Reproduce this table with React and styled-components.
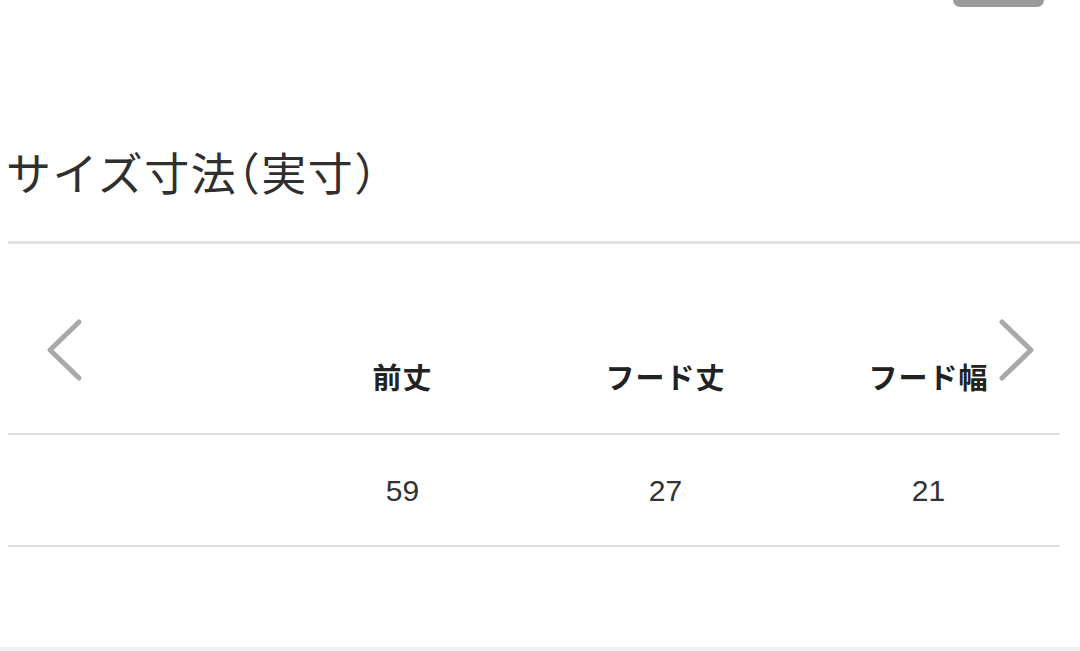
import styled, { createGlobalStyle } from "styled-components";

const GlobalStyle = createGlobalStyle`
  html, body {
    margin: 0;
    padding: 0;
    background: #fff;
  }
  body {
    font-family: "Noto Sans CJK JP", "Liberation Sans", sans-serif;
    color: #333;
    height: 651px;
    overflow: hidden;
  }
`;

const Page = styled.div`
  display: flex;
  flex-direction: column;
  height: 651px;
`;

const TopBar = styled.div`
  display: flex;
  justify-content: flex-end;
  height: 7px;
  padding-right: 36px;
  overflow: hidden;
`;

const Handle = styled.div`
  width: 91px;
  height: 7px;
  background: #9b9b9b;
  border-radius: 0 0 12px 12px;
`;

const Title = styled.h2`
  margin: 0;
  padding: 138px 0 0 6px;
  font-size: 45px;
  line-height: 54px;
  font-weight: 400;
  color: #2f2f2f;
  letter-spacing: 1.5px;
`;

const Paren = styled.span`
  font-feature-settings: "halt";
`;

const Divider = styled.div`
  margin: 42px 0 0 8px;
  height: 3px;
  background: #e2e2e2;
`;

const Slider = styled.div`
  position: relative;
  padding-left: 8px;
`;

const Table = styled.div`
  width: 1052px;
  display: grid;
  grid-template-columns: repeat(4, 1fr);
`;

const Cell = styled.div`
  text-align: center;
  line-height: 36px;
  border-bottom: 2px solid #dedede;
  padding: ${(p) => (p.$head ? "114px 0 39px" : "38px 0 36px")};
  font-size: ${(p) => (p.$head ? "29px" : "30px")};
  font-weight: ${(p) => (p.$head ? 700 : 400)};
  font-family: ${(p) =>
    p.$head
      ? `"Noto Sans CJK JP", sans-serif`
      : `"Liberation Sans", Arial, sans-serif`};
  color: ${(p) => (p.$head ? "#222" : "#333")};
  letter-spacing: ${(p) => (p.$head ? "1px" : "0")};
`;

const Arrow = styled.svg`
  position: absolute;
  top: 74px;
  ${(p) => (p.$side === "left" ? "left: 45px;" : "left: 998px;")}
  width: 38px;
  height: 64px;
`;

const BottomBand = styled.div`
  margin-top: auto;
  height: 4px;
  background: #f0f0f0;
`;

const headers = ["", "前丈", "フード丈", "フード幅"];
const values = ["", "59", "27", "21"];

function Chevron({ side }) {
  const points = side === "left" ? "34,4 5,32 34,60" : "4,4 33,32 4,60";
  return (
    <Arrow $side={side} viewBox="0 0 38 64">
      <polyline
        points={points}
        fill="none"
        stroke="#a9a9a9"
        strokeWidth="5"
        strokeLinecap="round"
        strokeLinejoin="round"
      />
    </Arrow>
  );
}

export default function App() {
  return (
    <Page>
      <GlobalStyle />
      <TopBar>
        <Handle />
      </TopBar>
      <Title>
        サイズ寸法<Paren>（</Paren>実寸<Paren>）</Paren>
      </Title>
      <Divider />
      <Slider>
        <Table>
          {headers.map((h, i) => (
            <Cell key={"h" + i} $head>
              {h || "\u00a0"}
            </Cell>
          ))}
          {values.map((v, i) => (
            <Cell key={"v" + i}>{v || "\u00a0"}</Cell>
          ))}
        </Table>
        <Chevron side="left" />
        <Chevron side="right" />
      </Slider>
      <BottomBand />
    </Page>
  );
}
